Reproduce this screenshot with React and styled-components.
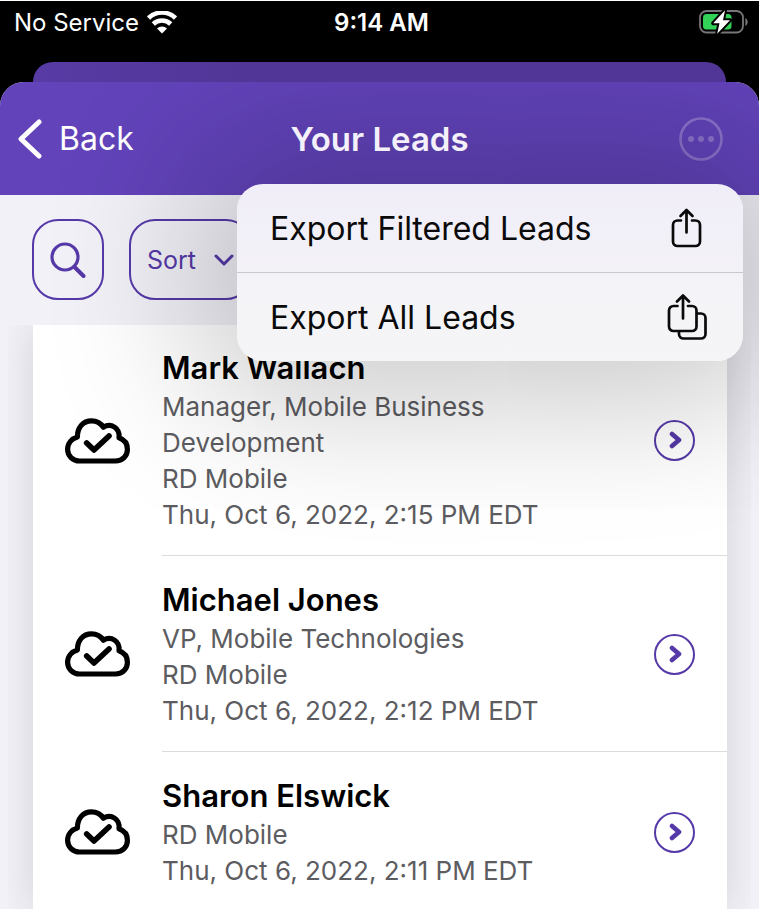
import React from "react";
import styled, { createGlobalStyle } from "styled-components";

const GlobalStyle = createGlobalStyle`
  * {
    box-sizing: border-box;
  }

  body {
    margin: 0;
    background: #000;
    font-family: Inter, "Liberation Sans", sans-serif;
    -webkit-font-smoothing: antialiased;
  }

  button {
    font-family: inherit;
    cursor: pointer;
  }
`;

const Screen = styled.div`
  display: flex;
  flex-direction: column;
  height: 100vh;
  overflow: hidden;
  background: #000;
  border-top: 1px solid #fff;
`;

const StatusBar = styled.div`
  display: grid;
  grid-template-columns: 1fr auto 1fr;
  align-items: center;
  height: 42px;
  margin-bottom: 19px;
  padding: 0 10px 0 14px;
  flex-shrink: 0;
  color: #fff;
  font-size: 24px;
`;

const Carrier = styled.div`
  display: flex;
  align-items: center;
  gap: 8px;
`;

const Clock = styled.time`
  font-weight: 600;
`;

const BatteryIcon = styled.svg`
  justify-self: end;
`;

const BackSheet = styled.div`
  height: 20px;
  flex-shrink: 0;
  margin: 0 33px;
  border-radius: 20px 20px 0 0;
  background: linear-gradient(90deg, #583ba5, #513697 30%);
`;

const Sheet = styled.div`
  display: flex;
  flex-direction: column;
  flex: 1;
  min-height: 0;
  overflow: hidden;
  border-radius: 24px 24px 0 0;
  background: #f2f1f8;
`;

const NavBar = styled.header`
  position: relative;
  display: grid;
  grid-template-columns: 1fr auto 1fr;
  align-items: center;
  height: 113px;
  flex-shrink: 0;
  padding: 0 18px;
  background: #6243ba;
  color: #f3f0fa;
`;

const BackButton = styled.button`
  display: flex;
  align-items: center;
  justify-self: start;
  gap: 17px;
  padding: 0;
  border: 0;
  background: none;
  color: #fff;
  font-size: 32px;
`;

const Title = styled.h1`
  position: relative;
  z-index: 3;
  margin: 0;
  font-size: 33px;
  font-weight: 600;
`;

const MoreButton = styled.button`
  display: flex;
  justify-self: end;
  margin-right: 18px;
  padding: 0;
  border: 0;
  background: none;
  color: rgba(255, 255, 255, 0.25);
`;

const Menu = styled.div`
  position: absolute;
  z-index: 2;
  top: 102px;
  right: 16px;
  width: 506px;
  border-radius: 26px;
  background: linear-gradient(#f0edf8, #f4f3f7 60%, #f5f5f7);
  box-shadow: 0 0 150px 40px rgba(0, 0, 0, 0.22);
`;

const MenuItem = styled.button`
  display: flex;
  align-items: center;
  justify-content: space-between;
  width: 100%;
  height: 88px;
  padding: 0 34px 0 33px;
  border: 0;
  background: none;
  color: #0a0a0a;
  font-size: 32px;

  & + & {
    height: 89px;
    border-top: 1px solid #c9c8ce;
  }
`;

const Toolbar = styled.div`
  display: flex;
  gap: 25px;
  flex-shrink: 0;
  padding: 24px 32px 25px;
`;

const ToolButton = styled.button`
  display: flex;
  align-items: center;
  justify-content: center;
  gap: 18px;
  height: 81px;
  padding: 0 16px;
  border: 2px solid #5639a8;
  border-radius: 26px;
  background: none;
  color: #5639a8;
  font-size: 25px;
`;

const ListArea = styled.main`
  flex: 1;
  min-height: 0;
  margin: 0 8px;
  padding: 0 24px 0 25px;
  overflow: hidden;
`;

const LeadList = styled.ul`
  margin: 0;
  padding: 0 0 0 32px;
  min-height: 100%;
  list-style: none;
  background: #fff;
  box-shadow: 0 0 40px rgba(0, 0, 0, 0.13);
`;

const Lead = styled.li`
  display: flex;
  align-items: center;
  gap: 32px;

  > svg {
    flex-shrink: 0;
  }
`;

const LeadBody = styled.div`
  display: flex;
  align-items: center;
  justify-content: space-between;
  flex: 1;
  gap: 24px;
  padding: 23px 32px 22px 0;
  border-bottom: 1px solid #dcdcde;

  ${Lead}:first-child & {
    padding-top: 22px;
  }
`;

const LeadName = styled.h2`
  margin: 0;
  color: #000;
  font-size: 31px;
  font-weight: 600;
  line-height: 42px;
`;

const LeadLine = styled.p`
  margin: 0;
  max-width: 400px;
  color: #5c5c61;
  font-size: 26px;
  line-height: 36px;
`;

const OpenButton = styled.button`
  display: flex;
  align-items: center;
  justify-content: center;
  flex-shrink: 0;
  width: 41px;
  height: 41px;
  padding: 0;
  border: 2px solid #5639a8;
  border-radius: 50%;
  background: none;
  color: #5639a8;
`;

const leads = [
  {
    name: "Mark Wallach",
    title: "Manager, Mobile Business Development",
    company: "RD Mobile",
    date: "Thu, Oct 6, 2022, 2:15 PM EDT",
  },
  {
    name: "Michael Jones",
    title: "VP, Mobile Technologies",
    company: "RD Mobile",
    date: "Thu, Oct 6, 2022, 2:12 PM EDT",
  },
  {
    name: "Sharon Elswick",
    company: "RD Mobile",
    date: "Thu, Oct 6, 2022, 2:11 PM EDT",
  },
];

const stroke = {
  fill: "none",
  stroke: "currentColor",
  strokeLinecap: "round",
  strokeLinejoin: "round",
};

const Wifi = () => (
  <svg width="30" height="23" viewBox="0 0 30 23" fill="none" stroke="#fff">
    <path d="M1.500 7a19.500 19.500 0 0 1 27 0" strokeWidth="4.600" />
    <path d="M6.300 13a12.500 12.500 0 0 1 17.400 0" strokeWidth="4.600" />
    <path d="M15 22.500l-5-5a7 7 0 0 1 10 0z" fill="#fff" stroke="none" />
  </svg>
);

const Battery = () => (
  <BatteryIcon width="50" height="26" viewBox="0 0 50 26">
    <rect x="1" y="2" width="43" height="21.5" rx="6.5" fill="none" stroke="#77777a" strokeWidth="1.8" />
    <path d="M46.400 9v8c3-1.400 3-6.600 0-8z" fill="#77777a" />
    <rect x="4" y="5" width="28.5" height="15.5" rx="3.5" fill="#32d158" />
    <path
      d="M26 1.200L14.200 14.300h6.300L18.200 24.800 31 11.200h-7z"
      fill="#fff"
      stroke="#000"
      strokeWidth="4"
      strokeLinejoin="round"
      paintOrder="stroke"
    />
  </BatteryIcon>
);

const BackChevron = () => (
  <svg width="24" height="40" viewBox="0 0 24 40" {...stroke} strokeWidth="5">
    <path d="M21 3L3 20l18 17" />
  </svg>
);

const More = () => (
  <svg width="44" height="44" viewBox="0 0 44 44" fill="currentColor">
    <circle cx="22" cy="22" r="20.5" fill="none" stroke="currentColor" strokeWidth="2.6" />
    <circle cx="12" cy="22" r="3" />
    <circle cx="22" cy="22" r="3" />
    <circle cx="32" cy="22" r="3" />
  </svg>
);

const Share = () => (
  <svg width="46" height="40" viewBox="0 0 46 40" {...stroke} strokeWidth="2.7">
    <path d="M18 12.500h-3.500a4.500 4.500 0 0 0-4.500 4.500v16.500a4.500 4.500 0 0 0 4.500 4.500h18a4.500 4.500 0 0 0 4.500-4.500v-16.500a4.500 4.500 0 0 0-4.500-4.500h-3.500" />
    <path d="M23.500 24.500v-22M17.500 8l6-6 6 6" />
  </svg>
);

const ShareAll = () => (
  <svg width="46" height="46" viewBox="0 0 46 46" {...stroke} strokeWidth="2.7">
    <path d="M14.500 12h-4A4.500 4.500 0 0 0 6 16.500v16a4.500 4.500 0 0 0 4.500 4.500h18.500a4.500 4.500 0 0 0 4.500-4.500v-16a4.500 4.500 0 0 0-4.500-4.500h-4" />
    <path d="M20 24.500V2M14 7.500l6-6 6 6" />
    <path d="M34.500 19.500h3.500a4.500 4.500 0 0 1 4.500 4.500v16a4.500 4.500 0 0 1-4.500 4.500H20.500a4.500 4.500 0 0 1-4.500-4.500v-2.500" />
  </svg>
);

const Search = () => (
  <svg width="36" height="36" viewBox="0 0 36 36" {...stroke}>
    <circle cx="15" cy="15" r="13" strokeWidth="3.2" />
    <path d="M25 25.500l8.500 8.500" strokeWidth="4" />
  </svg>
);

const ChevronDown = () => (
  <svg width="20" height="12" viewBox="0 0 20 12" {...stroke} strokeWidth="3">
    <path d="M2 2l8 8 8-8" />
  </svg>
);

const CloudCheck = () => (
  <svg width="65" height="46" viewBox="0 0 65 46" {...stroke} strokeWidth="5.200">
    <path d="M14.500 43C7.800 43 2.600 37.800 2.600 31.300c0-6 4-10.600 9.800-12.300C12.300 9.500 18 2.800 26.500 2.800c5.200 0 9.300 2.300 11.800 6.400 7.700-4.500 17 .800 15.700 10.600 5 1.700 8.400 6 8.400 11.700C62.400 38 57.500 43 50.500 43z" />
    <path d="M21.700 25l7.300 7 15-14" strokeWidth="5.600" />
  </svg>
);

const ChevronRight = () => (
  <svg width="14" height="18" viewBox="0 0 14 18" {...stroke} strokeWidth="4.600">
    <path d="M4 3l7 6-7 6" />
  </svg>
);

const LeadRow = ({ lead }) => (
  <Lead>
    <CloudCheck />
    <LeadBody>
      <div>
        <LeadName>{lead.name}</LeadName>
        {lead.title && <LeadLine>{lead.title}</LeadLine>}
        <LeadLine>{lead.company}</LeadLine>
        <LeadLine>{lead.date}</LeadLine>
      </div>
      <OpenButton aria-label={`Open ${lead.name}`}>
        <ChevronRight />
      </OpenButton>
    </LeadBody>
  </Lead>
);

const App = () => (
  <>
    <GlobalStyle />
    <Screen>
      <StatusBar>
        <Carrier>
          No Service
          <Wifi />
        </Carrier>
        <Clock>9:14 AM</Clock>
        <Battery />
      </StatusBar>
      <BackSheet />
      <Sheet>
        <NavBar>
          <BackButton>
            <BackChevron />
            Back
          </BackButton>
          <Title>Your Leads</Title>
          <MoreButton aria-label="More">
            <More />
          </MoreButton>
          <Menu>
            <MenuItem>
              Export Filtered Leads
              <Share />
            </MenuItem>
            <MenuItem>
              Export All Leads
              <ShareAll />
            </MenuItem>
          </Menu>
        </NavBar>
        <Toolbar>
          <ToolButton aria-label="Search">
            <Search />
          </ToolButton>
          <ToolButton>
            Sort
            <ChevronDown />
          </ToolButton>
        </Toolbar>
        <ListArea>
          <LeadList>
            {leads.map((lead) => (
              <LeadRow key={lead.name} lead={lead} />
            ))}
          </LeadList>
        </ListArea>
      </Sheet>
    </Screen>
  </>
);

export default App;
